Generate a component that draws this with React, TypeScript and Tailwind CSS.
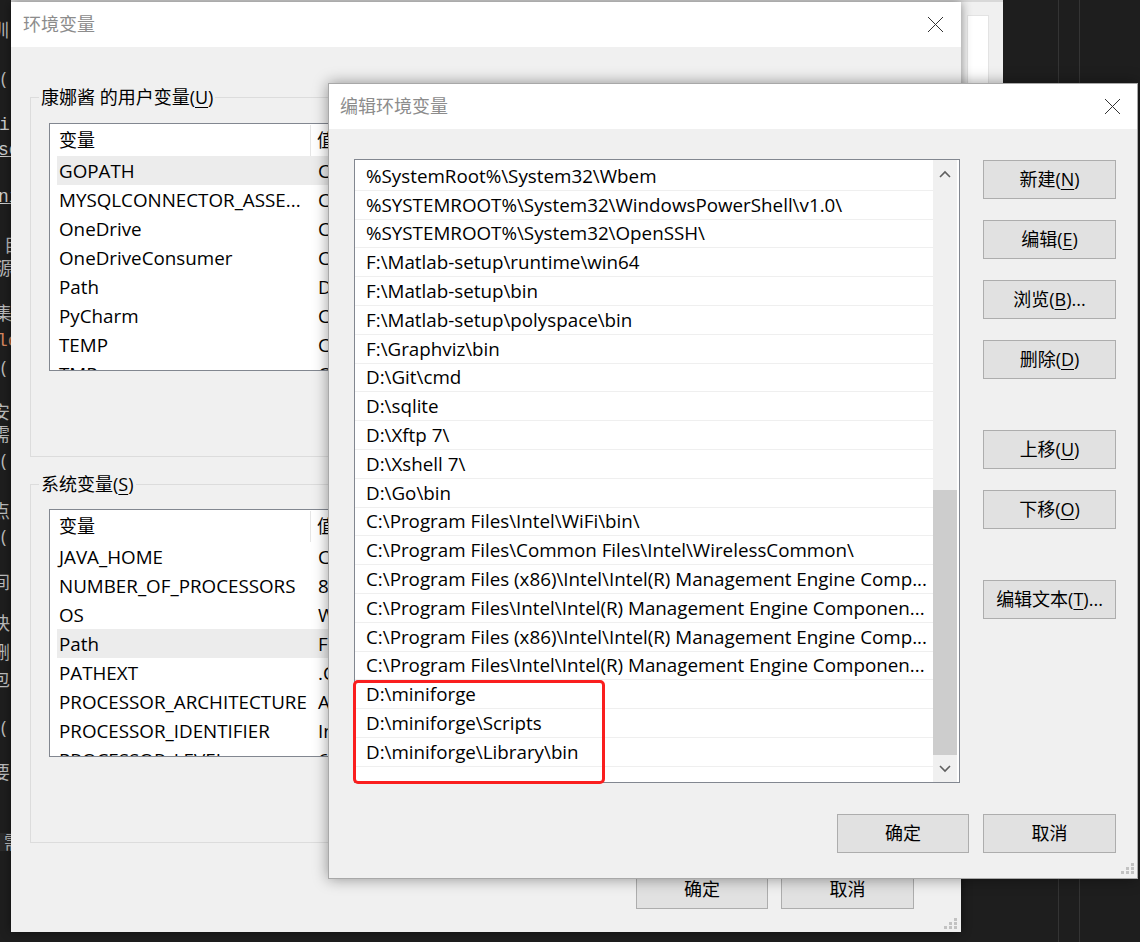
import React from "react"

const FONT = "font-['Open_Sans','Noto_Sans_CJK_SC',sans-serif]"

const userVars = [
  { name: "GOPATH", value: "C:\\Users\\康娜酱\\go", selected: true },
  { name: "MYSQLCONNECTOR_ASSE...", value: "C:\\Program Files (x86)\\MySQL" },
  { name: "OneDrive", value: "C:\\Users\\康娜酱\\OneDrive" },
  { name: "OneDriveConsumer", value: "C:\\Users\\康娜酱\\OneDrive" },
  { name: "Path", value: "D:\\Go\\bin" },
  { name: "PyCharm", value: "C:\\Program Files\\JetBrains" },
  { name: "TEMP", value: "C:\\Users\\康娜酱\\AppData\\Local\\Temp" },
  { name: "TMP", value: "C:\\Users\\康娜酱\\AppData\\Local\\Temp" },
]

const systemVars = [
  { name: "JAVA_HOME", value: "C:\\Program Files\\Java" },
  { name: "NUMBER_OF_PROCESSORS", value: "8" },
  { name: "OS", value: "Windows_NT" },
  { name: "Path", value: "F:\\Matlab-setup\\bin", selected: true },
  { name: "PATHEXT", value: ".COM;.EXE;.BAT;.CMD" },
  { name: "PROCESSOR_ARCHITECTURE", value: "AMD64" },
  { name: "PROCESSOR_IDENTIFIER", value: "Intel64 Family 6" },
  { name: "PROCESSOR_LEVEL", value: "6" },
]

const paths = [
  "%SystemRoot%\\System32\\Wbem",
  "%SYSTEMROOT%\\System32\\WindowsPowerShell\\v1.0\\",
  "%SYSTEMROOT%\\System32\\OpenSSH\\",
  "F:\\Matlab-setup\\runtime\\win64",
  "F:\\Matlab-setup\\bin",
  "F:\\Matlab-setup\\polyspace\\bin",
  "F:\\Graphviz\\bin",
  "D:\\Git\\cmd",
  "D:\\sqlite",
  "D:\\Xftp 7\\",
  "D:\\Xshell 7\\",
  "D:\\Go\\bin",
  "C:\\Program Files\\Intel\\WiFi\\bin\\",
  "C:\\Program Files\\Common Files\\Intel\\WirelessCommon\\",
  "C:\\Program Files (x86)\\Intel\\Intel(R) Management Engine Comp...",
  "C:\\Program Files\\Intel\\Intel(R) Management Engine Componen...",
  "C:\\Program Files (x86)\\Intel\\Intel(R) Management Engine Comp...",
  "C:\\Program Files\\Intel\\Intel(R) Management Engine Componen...",
  "D:\\miniforge",
  "D:\\miniforge\\Scripts",
  "D:\\miniforge\\Library\\bin",
  "",
]

// bits of the editor behind the windows, cut off at the left edge
const editorBits = [
  { top: 18, text: "圳", cls: "text-[#bdbdbd] -ml-[9px]" },
  { top: 66, text: "(", cls: "text-[#bdbdbd] ml-[1px]" },
  { top: 113, text: "it", cls: "text-[#cfcfcf] -ml-[1px] font-['Liberation_Mono',monospace]" },
  { top: 138, text: "se", cls: "text-[#cfcfcf] -ml-[2px] font-['Liberation_Mono',monospace] underline" },
  { top: 185, text: "ni", cls: "text-[#cfcfcf] -ml-[2px] font-['Liberation_Mono',monospace] underline" },
  { top: 233, text: "目", cls: "text-[#bdbdbd] ml-[4px]" },
  { top: 256, text: "源", cls: "text-[#bdbdbd] -ml-[4px]" },
  { top: 301, text: "集", cls: "text-[#bdbdbd] -ml-[6px]" },
  { top: 329, text: "lo", cls: "text-[#d7875f] -ml-[3px] font-['Liberation_Mono',monospace]" },
  { top: 355, text: "(", cls: "text-[#bdbdbd] ml-[1px]" },
  { top: 400, text: "安", cls: "text-[#bdbdbd] -ml-[8px]" },
  { top: 422, text: "需", cls: "text-[#bdbdbd] -ml-[8px]" },
  { top: 448, text: "(", cls: "text-[#bdbdbd] ml-[1px]" },
  { top: 499, text: "点", cls: "text-[#bdbdbd] -ml-[8px]" },
  { top: 524, text: "(", cls: "text-[#bdbdbd] ml-[1px]" },
  { top: 570, text: "间", cls: "text-[#bdbdbd] -ml-[8px]" },
  { top: 611, text: "快", cls: "text-[#bdbdbd] -ml-[8px]" },
  { top: 640, text: "删", cls: "text-[#bdbdbd] -ml-[8px]" },
  { top: 667, text: "包", cls: "text-[#bdbdbd] -ml-[8px]" },
  { top: 715, text: "(", cls: "text-[#bdbdbd] ml-[1px]" },
  { top: 760, text: "要", cls: "text-[#bdbdbd] -ml-[8px]" },
]

function CloseX() {
  return (
    <svg width="17" height="17" viewBox="0 0 17 17">
      <path d="M1 1L16 16M16 1L1 16" stroke="#333" strokeWidth="1" fill="none" />
    </svg>
  )
}

function Grip() {
  return (
    <svg width="14" height="12" viewBox="0 0 14 12">
      {[
        [10, 0],
        [5, 4],
        [10, 4],
        [0, 8],
        [5, 8],
        [10, 8],
      ].map(([x, y], i) => (
        <rect key={i} x={x} y={y} width="3" height="3" fill="#c2c2c2" />
      ))}
    </svg>
  )
}

function Chevron({ up }: { up?: boolean }) {
  return (
    <svg width="12" height="8" viewBox="0 0 12 8">
      <polyline
        points={up ? "1,7 6,2 11,7" : "1,1 6,6 11,1"}
        stroke="#5f5f5f"
        strokeWidth="1.6"
        fill="none"
      />
    </svg>
  )
}

function WinButton({ children, w = "w-[133px]" }: { children: React.ReactNode; w?: string }) {
  return (
    <div
      className={`${w} h-[39px] shrink-0 flex items-center justify-center bg-[#e1e1e1] border border-[#adadad] text-[18px] text-black`}
    >
      {children}
    </div>
  )
}

function Key({ k }: { k: string }) {
  return <span className="underline underline-offset-[3px]">{k}</span>
}

function VarList({ rows }: { rows: { name: string; value: string; selected?: boolean }[] }) {
  return (
    <div className="h-[248px] w-[880px] border border-[#828790] bg-white overflow-hidden">
      <div className="h-[32px] pt-[1px] flex">
        <div className="w-[261px] pl-[9px] flex items-center border-r border-[#e5e5e5]">变量</div>
        <div className="pl-[6px] flex items-center">值</div>
      </div>
      {rows.map((r) => (
        <div
          key={r.name}
          className={`ml-[7px] h-[29px] flex items-center text-[18.8px] leading-[24px] ${r.selected ? "bg-[#ececec]" : ""}`}
        >
          <div className="w-[254px] pl-[2px] whitespace-nowrap">{r.name}</div>
          <div className="pl-[7px] whitespace-nowrap">{r.value}</div>
        </div>
      ))}
    </div>
  )
}

function EnvDialog() {
  return (
    <div className="absolute left-[11px] top-[2px] w-[950px] h-[930px] flex flex-col bg-[#f0f0f0] shadow-[0_0_10px_rgba(0,0,0,0.45)]">
      <div className="h-[45px] shrink-0 bg-white flex items-center justify-between pl-[12px] pr-[17px]">
        <span className="text-[18px] text-[#8c8c8c]">环境变量</span>
        <CloseX />
      </div>
      <div className="flex-1 flex flex-col px-[19px] text-[18px] text-black">
        <fieldset className="mt-[38px] border border-[#dcdcdc] pb-[85px]">
          <legend className="ml-[8px] px-[2px] h-[24px] leading-[24px]">康娜酱 的用户变量(<Key k="U" />)</legend>
          <div className="mt-[14px] ml-[18px]">
            <VarList rows={userVars} />
          </div>
        </fieldset>
        <fieldset className="mt-[15px] border border-[#dcdcdc] pb-[85px]">
          <legend className="ml-[8px] px-[2px] h-[24px] leading-[24px]">系统变量(<Key k="S" />)</legend>
          <div className="mt-[13px] ml-[18px]">
            <VarList rows={systemVars} />
          </div>
        </fieldset>
        <div className="mt-[27px] flex justify-end gap-[13px] pr-[28px]">
          <WinButton w="w-[132px]">确定</WinButton>
          <WinButton>取消</WinButton>
        </div>
        <div className="mt-auto mb-[2px] -mr-[16px] flex justify-end">
          <Grip />
        </div>
      </div>
    </div>
  )
}

function EditDialog() {
  return (
    <div className="absolute left-[328px] top-[83px] w-[810px] h-[796px] flex flex-col bg-[#f0f0f0] border border-[#a8a8a8] shadow-[0_0_14px_rgba(0,0,0,0.4)]">
      <div className="h-[45px] shrink-0 bg-white flex items-center justify-between pl-[11px] pr-[16px]">
        <span className="text-[18px] text-[#8c8c8c]">编辑环境变量</span>
        <CloseX />
      </div>
      <div className="flex-1 flex flex-col text-[18px] text-black">
        <div className="flex pl-[25px] pt-[30px]">
          <div className="w-[606px] h-[624px] flex border border-[#828790] bg-white overflow-hidden">
            <div className="w-[578px] pt-[2px]">
              {paths.map((p, i) => (
                <div
                  key={i}
                  className="h-[28.8px] flex items-center pl-[11px] border-b border-[#efefef] whitespace-nowrap text-[18.8px] leading-[24px]"
                >
                  {p}
                </div>
              ))}
            </div>
            <div className="w-[24px] flex flex-col bg-[#f0f0f0]">
              <div className="h-[28px] flex items-center justify-center">
                <Chevron up />
              </div>
              <div className="h-[302px]" />
              <div className="h-[265px] bg-[#cdcdcd]" />
              <div className="flex-1 flex items-center justify-center">
                <Chevron />
              </div>
            </div>
          </div>
          <div className="ml-[23px] mt-[1px] flex flex-col">
            <WinButton>新建(<Key k="N" />)</WinButton>
            <div className="h-[21px]" />
            <WinButton>编辑(<Key k="E" />)</WinButton>
            <div className="h-[21px]" />
            <WinButton>浏览(<Key k="B" />)...</WinButton>
            <div className="h-[21px]" />
            <WinButton>删除(<Key k="D" />)</WinButton>
            <div className="h-[51px]" />
            <WinButton>上移(<Key k="U" />)</WinButton>
            <div className="h-[21px]" />
            <WinButton>下移(<Key k="O" />)</WinButton>
            <div className="h-[51px]" />
            <WinButton>编辑文本(<Key k="T" />)...</WinButton>
          </div>
        </div>
        <div className="mt-[31px] flex justify-end gap-[14px] pr-[21px]">
          <WinButton w="w-[132px]">确定</WinButton>
          <WinButton>取消</WinButton>
        </div>
        <div className="mt-auto mb-[3px] mr-[2px] flex justify-end">
          <Grip />
        </div>
      </div>
      {/* red highlight drawn over the three new entries */}
      <div className="absolute left-[24px] top-[596px] w-[252px] h-[104px] border-[3px] border-[#fa1e1e] rounded-[5px] pointer-events-none" />
    </div>
  )
}

export default function App() {
  return (
    <div className={`relative w-[1140px] h-[942px] overflow-hidden bg-[#1e1e1e] ${FONT}`}>
      {/* editor behind */}
      <div className="absolute left-0 top-0 w-[11px] h-full overflow-hidden">
        {editorBits.map((b, i) => (
          <div
            key={i}
            className={`absolute left-0 top-0 text-[18px] leading-[24px] whitespace-nowrap ${b.cls}`}
            style={{ top: b.top }}
          >
            {b.text}
          </div>
        ))}
        <div className="absolute left-0 top-[833px] w-full h-[18px] bg-[#2a2a2a]">
          <span className="block -mt-[3px] ml-[4px] text-[18px] leading-[24px] text-[#bdbdbd]">需</span>
        </div>
      </div>
      <div className="absolute left-[1058px] top-0 w-px h-full bg-[#343434]" />
      <div className="absolute left-[1079px] top-0 w-px h-full bg-[#343434]" />
      {/* window behind, peeking out at the top right */}
      <div className="absolute left-[955px] top-0 w-[48px] h-[600px] bg-[#f0f0f0]">
        <div className="ml-[12px] mt-[15px] w-[22px] h-[200px] bg-white border border-[#e3e3e3]" />
      </div>
      <div className="absolute left-[11px] top-0 w-[992px] h-[2px] bg-[#d8d8d8]" />
      <EnvDialog />
      <EditDialog />
    </div>
  )
}
